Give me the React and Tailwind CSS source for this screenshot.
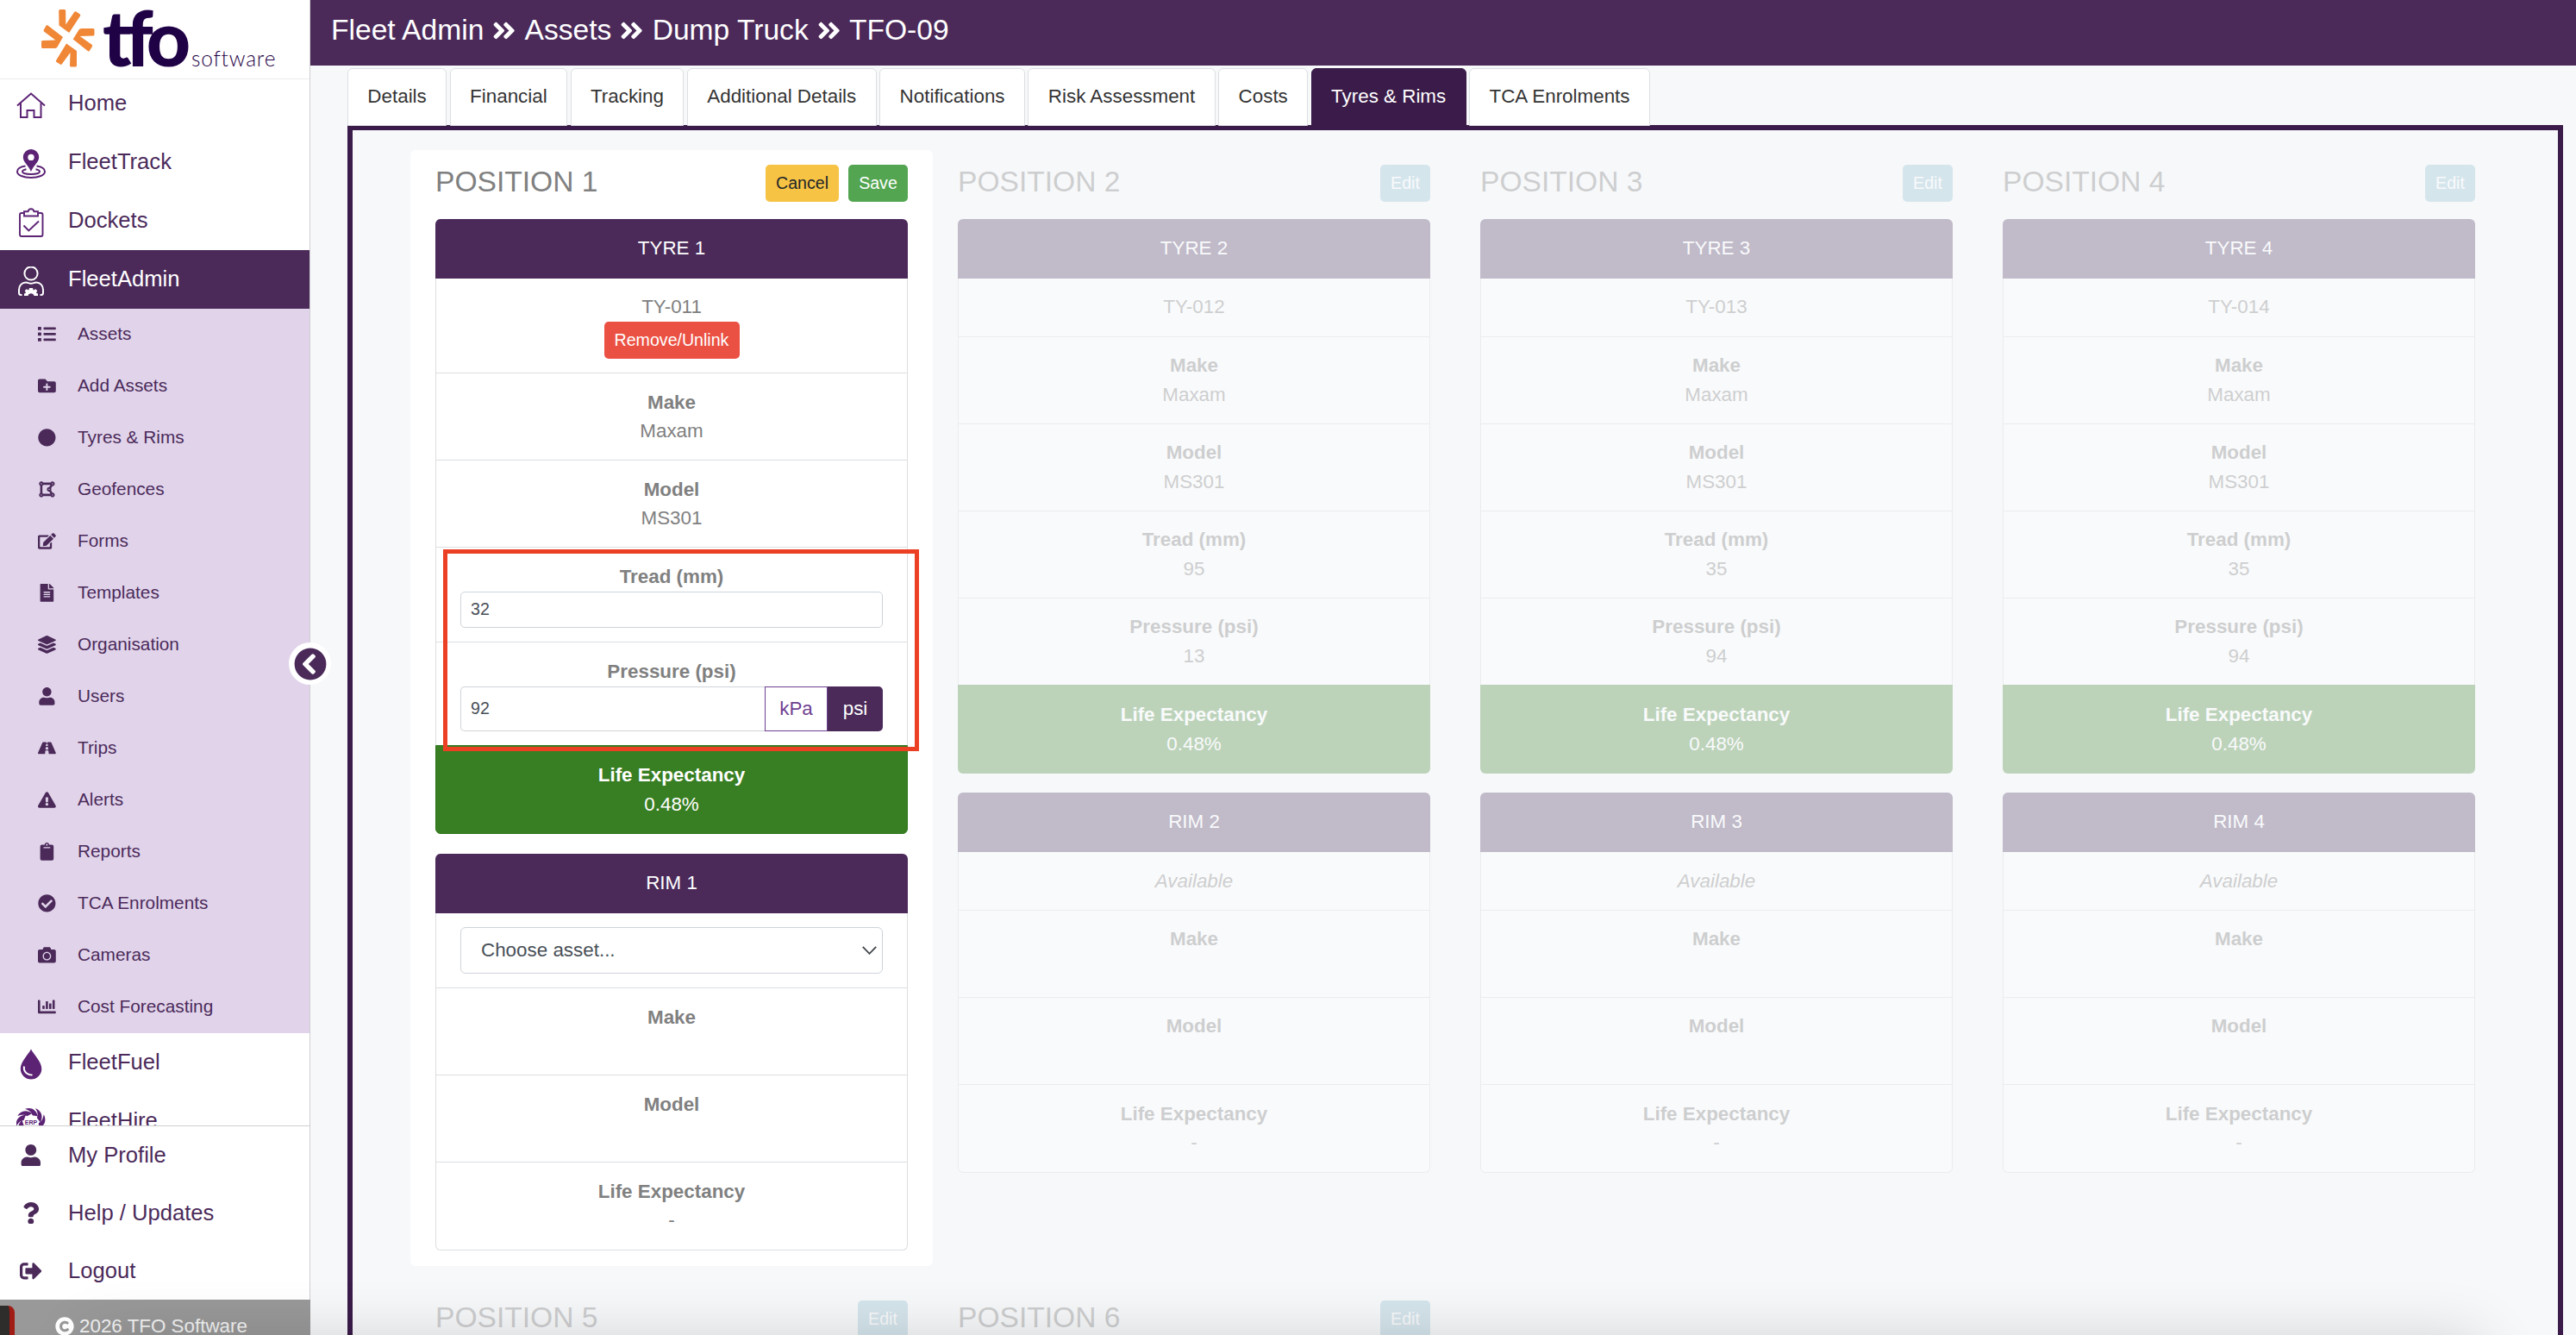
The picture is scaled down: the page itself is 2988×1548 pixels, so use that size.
import React from "react";
import {
  FaAngleDoubleRight, FaList, FaFolderPlus, FaCircle, FaDrawPolygon, FaEdit, FaFileAlt,
  FaLayerGroup, FaUser, FaRoad, FaExclamationTriangle, FaClipboard, FaCheckCircle,
  FaCamera, FaChartBar, FaQuestion, FaSignOutAlt, FaCopyright, FaChevronCircleLeft,
} from "react-icons/fa";

/* ---------- Sidebar icons ---------- */

const HomeIcon = () => (
  <svg viewBox="0 0 34 34" className="size-[34px]" fill="none" stroke="currentColor" strokeWidth="2">
    <path d="M1 17.500 17 3.500l16 14" />
    <path d="M5 14.500V31h7.500v-8h8v8H28.500V14.500" />
  </svg>
);

const TrackIcon = () => (
  <svg viewBox="0 0 34 34" className="size-[34px]" fill="none" stroke="currentColor" strokeWidth="2">
    <path
      fill="currentColor"
      stroke="none"
      fillRule="evenodd"
      d="M17 0a9.200 9.200 0 0 1 9.200 9.200C26.200 15 20.500 18 17 26 13.500 18 7.800 15 7.800 9.200A9.200 9.200 0 0 1 17 0zm0 5.700a3.700 3.700 0 1 0 0 7.400 3.700 3.700 0 0 0 0-7.400z"
    />
    <path d="M10.500 19.600C5 20.500 1 22.800 1 26c0 4 7 7 16 7s16-3 16-7c0-3.200-4-5.500-9.500-6.400" />
    <path d="M11.500 23.200c-2.800.6-4.500 1.600-4.500 2.700 0 1.900 4.500 3.100 10 3.100s10-1.200 10-3.100c0-1.100-1.700-2.100-4.500-2.700" />
  </svg>
);

const DocketIcon = () => (
  <svg viewBox="0 0 34 34" className="size-[34px]" fill="none" stroke="currentColor" strokeWidth="1.900">
    <path d="M8.500 6H6a2 2 0 0 0-2 2v23a2 2 0 0 0 2 2h22.500a2 2 0 0 0 2-2V8a2 2 0 0 0-2-2H26" />
    <path d="M9 4.300h4.500C14 2.300 15 1.300 17 1.300s3 1 3.500 3H25v5.200H9z" />
    <path d="m8.500 20.500 5.800 6L26 15.500" />
  </svg>
);

const AdminIcon = () => (
  <svg viewBox="0 0 34 34" className="size-[34px]" fill="none" stroke="currentColor" strokeWidth="2">
    <circle cx="17" cy="8" r="7.600" />
    <path d="M6.500 33H5.500C4 33 3 32 3 30.500V27c0-5 3.500-8.500 8-8.500 2.500 0 3.500 1.200 6 1.200s3.500-1.200 6-1.200c4.500 0 8 3.500 8 8.500v3.500c0 1.500-1 2.500-2.500 2.500h-1" />
    <path
      fill="currentColor"
      stroke="none"
      d="M9 34v-2.600l2-.7-1.200-2.600 2-1.800 2.500 1.300.7-2.600h4l.7 2.600 2.500-1.300 2 1.800-1.200 2.600 2 .7V34h-4.500a3.600 3.600 0 0 0-7 0z"
    />
  </svg>
);

const FuelIcon = () => (
  <svg viewBox="0 -1 34 36" className="h-[36px] w-[34px]">
    <path fill="currentColor" d="M17-.5C20.500 6.500 29.300 14 29.300 22.300A12.200 12.200 0 0 1 17 34.500 12.200 12.200 0 0 1 4.800 22.300C4.800 14 13.500 6.500 17-.5z" />
    <path fill="none" stroke="#fff" strokeWidth="1.900" d="M9 19.500c-1.200 5 2.500 10 9.500 10" />
  </svg>
);

const HireIcon = () => (
  <svg viewBox="0 0 34 34" className="size-[34px]">
    {[0, 40, 80, 120, 160, 200, 240, 280, 320].map((a) => (
      <path key={a} transform={"rotate(" + a + " 17 17)"} fill="currentColor" d="M10 .8C17-1.500 23 1.500 25 9.500L18.500 8.200C18 5 15 2.500 10 .8z" />
    ))}
    <text x="17" y="18.700" textAnchor="middle" fontFamily="Liberation Sans" fontWeight="700" fontSize="7" fill="currentColor">ERP</text>
  </svg>
);

const Burst = () => (
  <svg viewBox="0 0 62 67" className="h-[67px] w-[62px]" fill="#f08737">
    <path d="M20.200 1.500q0-1.500 1.500-1.500h5q1.500 0 1.500 1.500l.1 16L38 3.200q1-1.500 2.300-.6l4.200 2.600q1.300.9.500 2.200L32.200 27l-11.700-8.500z" />
    <path d="M61.500 23.500q0-1.500-1.500-1.500H46.500q-2 0-3 1.500L36.700 34.500l17.300 13.700q1.200.8 2-.5l2.900-4.600q.8-1.400-.4-2.300L44.700 30.900l15.300-.4q1.500 0 1.500-1.500z" />
    <path d="M41 65q0 1.500-1.500 1.500h-5Q33 66.500 33 65l.5-15-9.500 13q-1 1.500-2.400.6l-4-2.500q-1.300-.8-.5-2.200L29 39.500l12 8.500z" />
    <path d="M0 43.500Q0 45 1.500 45h14q2 0 3-1.500l6.500-11.500L7.500 18.500q-1.200-1-2 .3l-2.700 4.600q-.8 1.300.5 2.300l13 9.800-15 .5Q0 36 0 37.500z" />
  </svg>
);

function Logo() {
  return (
    <div className="flex h-[92px] shrink-0 items-start border-b border-[#ececec] bg-white pl-[48px] pt-[10.5px]">
      <Burst />
      <div className="-mt-[13px] ml-[9px] flex items-baseline">
        <span className="-mr-[11px] w-[114px] whitespace-nowrap font-['Lato'] text-[89px] font-black leading-[90px] tracking-[-7px] text-[#1f0146]">tfo</span>
        <span className="whitespace-nowrap font-['Lato'] text-[24.5px] font-light leading-[30px] tracking-[0.8px] text-[#1f0146]">software</span>
      </div>
    </div>
  );
}

/* ---------- Sidebar ---------- */

const SUB_ITEMS = [
  [FaList, "Assets"],
  [FaFolderPlus, "Add Assets"],
  [FaCircle, "Tyres & Rims"],
  [FaDrawPolygon, "Geofences"],
  [FaEdit, "Forms"],
  [FaFileAlt, "Templates"],
  [FaLayerGroup, "Organisation"],
  [FaUser, "Users"],
  [FaRoad, "Trips"],
  [FaExclamationTriangle, "Alerts"],
  [FaClipboard, "Reports"],
  [FaCheckCircle, "TCA Enrolments"],
  [FaCamera, "Cameras"],
  [FaChartBar, "Cost Forecasting"],
];

function MainItem({ icon: Icon, label, active }) {
  return (
    <div className={"flex h-[68px] shrink-0 items-center pl-[18.5px] " + (active ? "bg-[#4b2a5a] text-white" : "text-[#5c2375]")}>
      <span className="mt-1">
        <Icon />
      </span>
      <span className={"-mt-0.5 ml-[26.5px] text-[25.6px] " + (active ? "text-white" : "text-[#4b2a5a]")}>{label}</span>
    </div>
  );
}

function FootItem({ icon: Icon, label }) {
  return (
    <div className="flex h-[67px] items-center text-[#4b2a5a]">
      <span className="flex w-[72px] justify-center">
        <Icon className="h-[25.6px] w-auto" />
      </span>
      <span className="ml-[7px] text-[25.6px]">{label}</span>
    </div>
  );
}

function Sidebar() {
  return (
    <aside className="relative flex h-full w-[360px] shrink-0 flex-col border-r border-[#cfcfd1] bg-white">
      <Logo />
      <nav className="flex h-[1213px] shrink-0 flex-col overflow-hidden">
        <div className="-mt-[6px] flex flex-col">
          <MainItem icon={HomeIcon} label="Home" />
          <MainItem icon={TrackIcon} label="FleetTrack" />
          <MainItem icon={DocketIcon} label="Dockets" />
          <MainItem icon={AdminIcon} label="FleetAdmin" active />
          <div className="bg-[#e1d4ea] text-[#4b2a5a]">
            {SUB_ITEMS.map(([Icon, label]) => (
              <div key={label} className="flex h-[60px] items-center">
                <span className="-mt-px ml-[36.5px] flex w-[36px] justify-center">
                  <Icon className="h-[20.8px] w-auto" />
                </span>
                <span className="-mt-[3px] ml-[17.5px] text-[20.8px]">{label}</span>
              </div>
            ))}
          </div>
          <MainItem icon={FuelIcon} label="FleetFuel" />
          <MainItem icon={HireIcon} label="FleetHire" />
        </div>
      </nav>
      <div className="shrink-0 border-t border-[#cfcfd1] bg-white">
        <FootItem icon={FaUser} label="My Profile" />
        <FootItem icon={FaQuestion} label="Help / Updates" />
        <FootItem icon={FaSignOutAlt} label="Logout" />
      </div>
      <div className="-mr-px flex h-[41px] shrink-0 items-start bg-[#999999] pl-[64px] pt-[20px] text-[22.4px] leading-[22px] text-white">
        <FaCopyright className="size-[22px]" />
        <span className="ml-[6px] text-[#f4f4f4]">2026 TFO Software</span>
      </div>
      <div className="absolute left-0 top-[1514px] h-[34px] w-[17px] rounded-tr-[8px] border-r-[6px] border-[#a01c14] bg-[#2e2d2b]" />
      <div className="absolute -right-[25px] top-[745px] flex size-[49px] items-center justify-center rounded-full bg-white text-[#4b2a5a]">
        <FaChevronCircleLeft className="size-[38px]" />
      </div>
    </aside>
  );
}

/* ---------- Header and tabs ---------- */

function Header() {
  const crumbs = ["Fleet Admin", "Assets", "Dump Truck", "TFO-09"];
  return (
    <header className="flex h-[76px] shrink-0 items-center bg-[#4b2a5a] pb-[5px] pl-[24px] text-[33.6px] text-white">
      {crumbs.map((c, i) => (
        <React.Fragment key={c}>
          {i > 0 && <FaAngleDoubleRight className="mx-[8px] w-[31.3px] text-[31px]" />}
          <span>{c}</span>
        </React.Fragment>
      ))}
    </header>
  );
}

const TABS = ["Details", "Financial", "Tracking", "Additional Details", "Notifications", "Risk Assessment", "Costs", "Tyres & Rims", "TCA Enrolments"];

function Tabs() {
  return (
    <div className="relative mt-[3px] flex h-[67px] shrink-0 gap-[3.6px] pl-[43px]">
      {TABS.map((t) => (
        <div
          key={t}
          className={
            "flex items-center whitespace-nowrap rounded-t-[6px] border px-[22.35px] pb-[2px] text-[22.4px] " +
            (t === "Tyres & Rims" ? "border-[#3a1b49] bg-[#3a1b49] text-white" : "border-[#dcdfe2] bg-white text-[#343434]")
          }
        >
          {t}
        </div>
      ))}
    </div>
  );
}

/* ---------- Position cards ---------- */

function Cell({ label, value, className }) {
  return (
    <div className={"flex flex-col items-center leading-[33.6px] " + className}>
      <span className="font-bold">{label}</span>
      <span>{value}</span>
    </div>
  );
}

function TableHead({ children, dim }) {
  return (
    <div className={"flex h-[69px] items-center justify-center rounded-t-[6px] pb-px text-white " + (dim ? "bg-[#4f3a65]" : "bg-[#4b2a5a]")}>
      {children}
    </div>
  );
}

const ROW = "h-[101px] border-x border-b border-[#dcdee0] bg-white pt-[16.5px]";
const DIM_ROW = "h-[101px] border-x border-b border-[#d4d6d8] bg-white pt-[16px]";
const GREEN = "h-[103px] rounded-b-[6px] border border-[#2f741c] bg-[#387e22] pt-[17px] text-white";

function ActiveCard() {
  return (
    <section className="h-[1294px] rounded-[6px] bg-white px-[29px] pt-[17px] text-[22.4px] text-[#808080]">
      <div className="mb-[20px] flex h-[43px] items-center">
        <h2 className="mr-auto text-[33.6px] leading-none">
          <span className="-mt-[4px] block">POSITION 1</span>
        </h2>
        <div className="flex gap-[11px] text-[19.6px]">
          <button className="h-[43px] w-[85px] rounded-[5px] bg-[#f6c344] text-[#212529]">Cancel</button>
          <button className="h-[43px] w-[69px] rounded-[5px] bg-[#53a551] text-white">Save</button>
        </div>
      </div>
      <TableHead>TYRE 1</TableHead>
      <div className="flex h-[110px] flex-col items-center border-x border-b border-[#dcdee0] pt-[15px]">
        <span className="leading-[35px]">TY-011</span>
        <button className="h-[43px] w-[157px] rounded-[5px] bg-[#eb5143] text-[19.6px] text-white">Remove/Unlink</button>
      </div>
      <Cell label="Make" value="Maxam" className={ROW} />
      <Cell label="Model" value="MS301" className={ROW} />
      <div className="flex h-[110px] flex-col items-center border-x border-b border-[#dcdee0] px-[28px] pt-[16px]">
        <span className="font-bold leading-[35px]">Tread (mm)</span>
        <div className="flex h-[42px] w-full items-center rounded-[5px] border border-[#ced4da] px-[11px] text-[19.6px] text-[#495057]">32</div>
      </div>
      <div className="flex h-[119px] flex-col items-center border-x border-[#dcdee0] px-[28px] pt-[16px]">
        <span className="font-bold leading-[35px]">Pressure (psi)</span>
        <div className="flex h-[52px] w-full">
          <div className="flex flex-1 items-center rounded-l-[5px] border border-r-0 border-[#ced4da] px-[11px] text-[19.6px] text-[#495057]">92</div>
          <div className="flex w-[73px] items-center justify-center border border-[#6f3f92] pb-px text-[#6f3f92]">kPa</div>
          <div className="flex w-[64px] items-center justify-center rounded-r-[5px] bg-[#4b2a5a] pb-px text-white">psi</div>
        </div>
      </div>
      <Cell label="Life Expectancy" value="0.48%" className={GREEN} />
      <div className="h-[23px]" />
      <TableHead>RIM 1</TableHead>
      <div className="h-[87px] border-x border-b border-[#dcdee0] px-[28px] pt-[16px]">
        <div className="flex h-[54px] items-center justify-between rounded-[6px] border border-[#ced4da] pl-[23px] pr-[6.5px] text-[#495057]">
          <span className="pb-px">Choose asset...</span>
          <svg viewBox="0 0 17 10" className="h-[10px] w-[17px]" fill="none" stroke="#42474c" strokeWidth="1.800">
            <path d="m.8.8 7.700 8 7.700-8" />
          </svg>
        </div>
      </div>
      <Cell label="Make" value="" className={ROW} />
      <Cell label="Model" value="" className={ROW} />
      <Cell label="Life Expectancy" value="-" className="h-[102px] rounded-b-[6px] border-x border-b border-[#dcdee0] pt-[16.5px]" />
    </section>
  );
}

function DimCard({ n, tyre, tread, pressure }) {
  return (
    <section className="rounded-[6px] bg-white/30 px-[29px] pt-[17px] text-[22.4px] text-[#787878] opacity-[0.32]">
      <div className="mb-[20px] flex h-[43px] items-center">
        <h2 className="mr-auto text-[33.6px] leading-none">
          <span className="-mt-[4px] block">POSITION {n}</span>
        </h2>
        <button className="h-[43px] w-[58px] rounded-[5px] bg-[#8fbed1] text-[19.6px] text-white">Edit</button>
      </div>
      {tyre && (
        <>
          <TableHead dim>TYRE {n}</TableHead>
          <div className="flex h-[68px] items-center justify-center border-x border-b border-[#d4d6d8] bg-white pb-[2px]">{tyre}</div>
          <Cell label="Make" value="Maxam" className={DIM_ROW} />
          <Cell label="Model" value="MS301" className={DIM_ROW} />
          <Cell label="Tread (mm)" value={tread} className={DIM_ROW} />
          <Cell label="Pressure (psi)" value={pressure} className="h-[100px] border-x border-[#d4d6d8] bg-white pt-[16px]" />
          <Cell label="Life Expectancy" value="0.48%" className="h-[103px] rounded-b-[6px] bg-[#438636] pt-[18px] text-white" />
          <div className="h-[22px]" />
          <TableHead dim>RIM {n}</TableHead>
          <div className="flex h-[68px] items-center justify-center border-x border-b border-[#d4d6d8] bg-white italic">Available</div>
          <Cell label="Make" value="" className={DIM_ROW} />
          <Cell label="Model" value="" className={DIM_ROW} />
          <Cell label="Life Expectancy" value="-" className="h-[102px] rounded-b-[6px] border-x border-b border-[#d4d6d8] bg-white pt-[16.5px]" />
        </>
      )}
    </section>
  );
}

export default function App() {
  return (
    <div className="relative flex h-[1548px] w-[2988px] overflow-hidden bg-[#f7f8fa] font-['Liberation_Sans',Arial,sans-serif]">
      <Sidebar />
      <main className="flex min-w-0 flex-1 flex-col">
        <Header />
        <div className="z-10 flex flex-col">
          <Tabs />
        </div>
        <div className="-mt-px ml-[43px] mr-[15px] min-h-0 flex-1 overflow-hidden border-x-[6px] border-t-[6px] border-[#3a1b49] pl-[67px] pt-[23px]">
          <div className="grid grid-cols-[repeat(4,606px)] gap-y-[23px]">
            <ActiveCard />
            <DimCard n={2} tyre="TY-012" tread="95" pressure="13" />
            <DimCard n={3} tyre="TY-013" tread="35" pressure="94" />
            <DimCard n={4} tyre="TY-014" tread="35" pressure="94" />
            <DimCard n={5} />
            <DimCard n={6} />
          </div>
        </div>
      </main>
      {/* Highlight frame over the tread and pressure fields */}
      <div className="absolute left-[514px] top-[637px] z-20 h-[234px] w-[552px] border-[5px] border-[#ec4024]" />
      {/* Soft shadow rising from the bottom edge */}
      <div className="pointer-events-none absolute left-[100px] right-[110px] top-[1552px] z-30 h-[100px] shadow-[0_0_70px_0_rgba(0,0,0,0.16)]" />
    </div>
  );
}
